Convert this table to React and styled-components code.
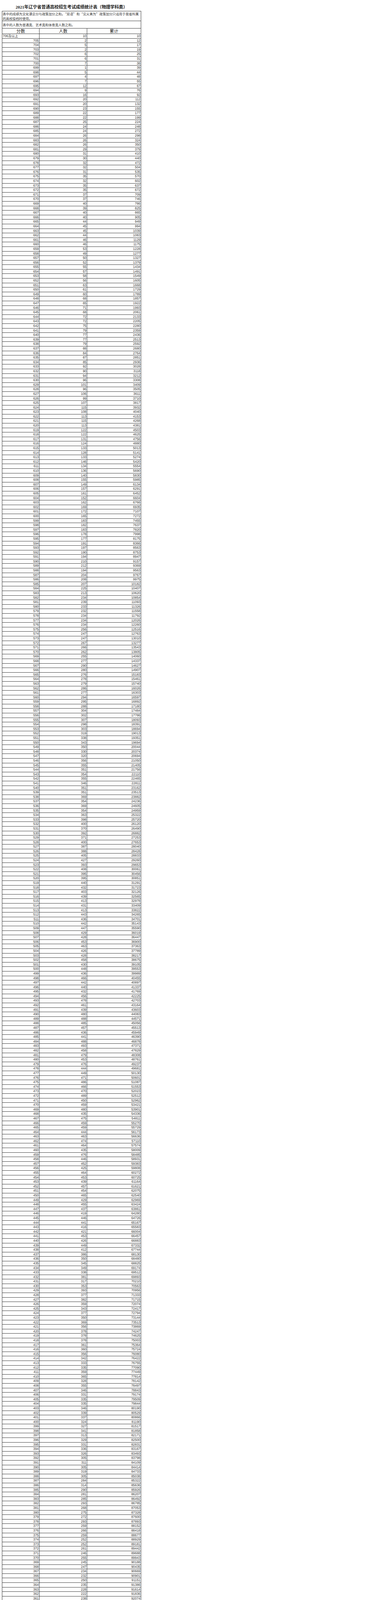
import React from 'react';
import styled, { createGlobalStyle } from 'styled-components';

const GlobalStyle = createGlobalStyle`
  html, body { margin: 0; padding: 0; background: #fff; }
  body {
    font-family: "Liberation Sans", "Noto Sans CJK SC", sans-serif;
    color: #2a2a2a;
  }
`;

function mulberry32(a) {
  return function () {
    a |= 0;
    a = (a + 0x6d2b79f5) | 0;
    let t = Math.imul(a ^ (a >>> 15), 1 | a);
    t = (t + Math.imul(t ^ (t >>> 7), 61 | t)) ^ t;
    return ((t ^ (t >>> 14)) >>> 0) / 4294967296;
  };
}

const rng = mulberry32(20210625);

function scaleSegment(scores, rawFn, target) {
  const raw = scores.map((s) => rawFn(s) * (1 + 0.12 * (rng() - 0.5)));
  const sum = raw.reduce((a, b) => a + b, 0);
  const vals = raw.map((r) => Math.max(1, Math.round((r * target) / sum)));
  const diff = target - vals.reduce((a, b) => a + b, 0);
  const idx = vals.indexOf(Math.max(...vals));
  vals[idx] += diff;
  return vals;
}

const known = {
  705: 2, 704: 5, 703: 2, 702: 6, 701: 6, 700: 7, 699: 1, 698: 5, 697: 4,
  696: 7, 695: 12, 694: 9, 693: 16,
  437: 386, 436: 350, 435: 345, 434: 349, 433: 338, 432: 381, 431: 317, 430: 353,
  161: 6, 160: 1, 158: 1, 157: 1, 156: 3, 155: 2, 154: 1, 152: 2, 151: 2, 150: 4,
};
const missing = new Set([159, 153, 167, 164]);

const segA = [];
for (let s = 692; s >= 438; s--) segA.push(s);
const segB = [];
for (let s = 429; s >= 162; s--) if (!missing.has(s)) segB.push(s);

const valsA = scaleSegment(
  segA,
  (s) => (s >= 480 ? Math.exp(-(((s - 480) / 120) ** 2)) : Math.exp(-(((480 - s) / 150) ** 2))),
  67652
);
const valsB = scaleSegment(
  segB,
  (s) => Math.exp(-(((430 - s) / 100) ** 2)) + 0.05 * Math.exp(-(430 - s) / 90),
  32151
);
segA.forEach((s, i) => (known[s] = valsA[i]));
segB.forEach((s, i) => (known[s] = valsB[i]));

const rows = [];
let cum = 10;
rows.push({ label: '706及以上', count: 10, total: 10, text: true });
for (let s = 705; s >= 150; s--) {
  if (missing.has(s)) continue;
  cum += known[s];
  rows.push({ label: String(s), count: known[s], total: cum });
}

const Page = styled.div`
  width: 1000px;
  padding-left: 2px;
  box-sizing: border-box;
`;

const Title = styled.div`
  width: 362px;
  height: 28px;
  box-sizing: border-box;
  padding: 11px 0 0 0;
  line-height: 14px;
  text-align: center;
  white-space: nowrap;
  font-family: "Liberation Serif", "Noto Sans CJK SC", serif;
  font-weight: 700;
  font-size: 11px;
  color: #1c1c1c;
`;

const GridFrame = styled.div`
  width: 356px;
  padding: 0 2px 3px 2px;
  border-left: 1px dotted #d6d6d6;
  border-right: 1px dotted #d6d6d6;
`;

const Table = styled.div`
  border-top: 1px solid #3a3a3a;
  border-left: 1px solid #3a3a3a;
`;

const NoteRow = styled.div`
  height: ${(p) => p.$h}px;
  box-sizing: border-box;
  border-right: 1px solid #3a3a3a;
  border-bottom: 1px solid #3a3a3a;
  padding: ${(p) => p.$pt}px 0 0 1px;
  font-family: "Noto Sans CJK SC", sans-serif;
  font-size: 8.4px;
  line-height: 12px;
  color: #333;
  white-space: nowrap;
`;

const Columns = styled.div`
  display: grid;
  grid-template-columns: 95px 122px 138px;
  box-sizing: border-box;
  border-bottom: 1px solid #3a3a3a;
`;

const HeaderRow = styled(Columns)`
  height: 14px;
`;

const HeaderCell = styled.div`
  border-right: 1px solid #3a3a3a;
  text-align: center;
  font-family: "Noto Sans CJK SC", sans-serif;
  font-size: 11px;
  line-height: 13px;
  color: #222;
`;

const DataRow = styled(Columns)`
  height: 11.595px;
`;

const Cell = styled.div`
  border-right: 1px solid #3a3a3a;
  text-align: ${(p) => (p.$left ? 'left' : 'right')};
  padding: 0 1px;
  font-size: 8.4px;
  line-height: 10.6px;
  color: #333;
  white-space: nowrap;
`;

export default function App() {
  return (
    <Page>
      <GlobalStyle />
      <Title>2021年辽宁省普通高校招生考试成绩统计表（物理学科类）</Title>
      <GridFrame>
        <Table>
          <NoteRow $h={25} $pt={0}>
            表中的成绩为文化课总分与政策加分之和。“双语”和“见义勇为”政策加分只适用于我省所属
            <br />
            的高校投档时使用。
          </NoteRow>
          <NoteRow $h={19} $pt={3}>表中的人数为普通类、艺术类和体育类人数之和。</NoteRow>
          <HeaderRow>
            <HeaderCell>分数</HeaderCell>
            <HeaderCell>人数</HeaderCell>
            <HeaderCell>累计</HeaderCell>
          </HeaderRow>
          {rows.map((r) => (
            <DataRow key={r.label}>
              <Cell $left={r.text}>{r.label}</Cell>
              <Cell>{r.count}</Cell>
              <Cell>{r.total}</Cell>
            </DataRow>
          ))}
        </Table>
      </GridFrame>
    </Page>
  );
}
